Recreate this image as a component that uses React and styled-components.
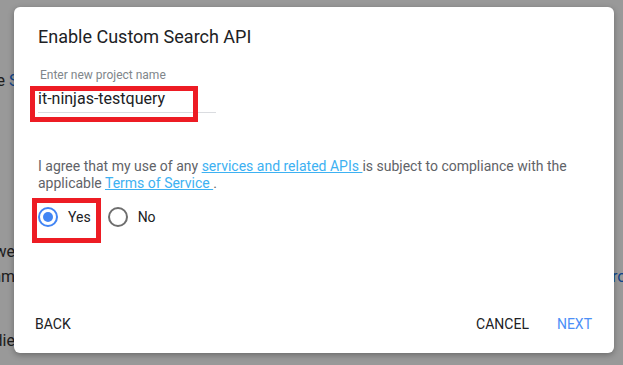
import React from "react";
import styled, { createGlobalStyle } from "styled-components";

const GlobalStyle = createGlobalStyle`
  html, body {
    margin: 0;
    padding: 0;
  }
  body {
    font-family: Roboto, "Noto Sans", "Liberation Sans", sans-serif;
  }
`;

const App = () => {
  return (
    <Page>
      <GlobalStyle />
      <Backdrop>
        <BgLine top={68}>
          <Lead width={9}>Open the </Lead>
          <BgLink>Search Console settings</BgLink>
        </BgLine>
        <BgLine top={146}>
          <Lead width={15}>Now we</Lead>
          <span> can set everything up</span>
        </BgLine>
        <BgLine>
          <Lead width={15}>environm</Lead>
          <span>ent for the</span>
          <Trail>
            <BgLink>roles</BgLink>
          </Trail>
        </BgLine>
        <BgLine top={39}>
          <Lead width={15}>studie</Lead>
          <span>s and more</span>
        </BgLine>
      </Backdrop>

      <Overlay>
        <Dialog>
          <Body>
            <Title>Enable Custom Search API</Title>

            <Field>
              <Label>Enter new project name</Label>
              <Input>it-ninjas-testquery</Input>
              <Highlight left={-8} top={19} width={168} height={36} />
            </Field>

            <Agreement>
              I agree that my use of any <Link>services and related APIs </Link>
              is subject to compliance with the applicable{" "}
              <Link>Terms of Service </Link>.
            </Agreement>

            <Options>
              <Option>
                <Radio checked />
                <OptionText>Yes</OptionText>
                <Highlight left={-6} top={-9} width={69} height={45} />
              </Option>
              <Option>
                <Radio />
                <OptionText>No</OptionText>
              </Option>
            </Options>
          </Body>

          <Footer>
            <Button>Back</Button>
            <Spacer />
            <Button>Cancel</Button>
            <Button primary>Next</Button>
          </Footer>
        </Dialog>
      </Overlay>
    </Page>
  );
};

export default App;

const Page = styled.div`
  position: relative;
  width: 623px;
  height: 365px;
  overflow: hidden;
  background: #ffffff;
`;

const Backdrop = styled.div`
  display: flex;
  flex-direction: column;
  font-size: 16px;
  line-height: 25px;
  color: #333333;
`;

const BgLine = styled.div`
  display: flex;
  white-space: nowrap;
  margin-top: ${(p) => p.top || 0}px;
`;

const Lead = styled.span`
  display: flex;
  justify-content: flex-end;
  flex: 0 0 ${(p) => p.width}px;
  width: ${(p) => p.width}px;
  white-space: pre;
`;

const Trail = styled.span`
  margin-left: auto;
  flex: 0 0 11px;
  width: 11px;
`;

const BgLink = styled.span`
  color: #1a73e8;
`;

const Overlay = styled.div`
  position: absolute;
  inset: 0;
  background: rgba(0, 0, 0, 0.4);
  padding: 7px 0 0 14px;
  box-sizing: border-box;
`;

const Dialog = styled.div`
  display: flex;
  flex-direction: column;
  width: 600px;
  height: 346px;
  background: #ffffff;
  border-radius: 6px;
  box-shadow: 0 2px 6px rgba(0, 0, 0, 0.3);
`;

const Body = styled.div`
  display: flex;
  flex-direction: column;
  padding: 18px 24px 0;
`;

const Title = styled.h2`
  margin: 0;
  font-size: 18px;
  line-height: 24px;
  font-weight: 400;
  color: #202124;
`;

const Field = styled.div`
  position: relative;
  display: flex;
  flex-direction: column;
  width: 178px;
  margin-top: 18px;
`;

const Label = styled.div`
  margin-left: 2px;
  font-size: 12px;
  line-height: 16px;
  color: #80868b;
`;

const Input = styled.div`
  margin-top: 6px;
  padding-bottom: 3px;
  font-size: 16px;
  line-height: 20px;
  color: #202124;
  border-bottom: 1px solid #dadce0;
`;

const Highlight = styled.div`
  position: absolute;
  left: ${(p) => p.left}px;
  top: ${(p) => p.top}px;
  width: ${(p) => p.width}px;
  height: ${(p) => p.height}px;
  border: 5px solid #ed1c24;
  box-sizing: border-box;
  pointer-events: none;
`;

const Agreement = styled.p`
  margin: 45px 0 0;
  font-size: 14px;
  line-height: 17px;
  color: #5f6368;
`;

const Link = styled.a`
  color: #3db1f2;
  text-decoration: underline;
  white-space: pre;
`;

const Options = styled.div`
  display: flex;
  align-items: center;
  gap: 17px;
  margin-top: 13px;
  height: 24px;
`;

const Option = styled.label`
  position: relative;
  display: flex;
  align-items: center;
  gap: 10px;
`;

const Radio = styled.span`
  position: relative;
  width: 20px;
  height: 20px;
  border-radius: 50%;
  border: 2px solid ${(p) => (p.checked ? "#4285f4" : "#6e6e6e")};
  box-sizing: border-box;

  &::after {
    content: "";
    display: ${(p) => (p.checked ? "block" : "none")};
    position: absolute;
    left: 3px;
    top: 3px;
    width: 10px;
    height: 10px;
    border-radius: 50%;
    background: #4285f4;
  }
`;

const OptionText = styled.span`
  font-size: 14px;
  color: #202124;
`;

const Footer = styled.div`
  display: flex;
  align-items: center;
  gap: 12px;
  margin-top: auto;
  padding: 0 14px 11px 13px;
`;

const Spacer = styled.div`
  flex: 1;
`;

const Button = styled.button`
  border: none;
  background: none;
  padding: 0 8px;
  height: 36px;
  font-family: Roboto, "Noto Sans", "Liberation Sans", sans-serif;
  font-size: 14px;
  font-weight: 400;
  text-transform: uppercase;
  color: ${(p) => (p.primary ? "#4d8ff7" : "#202124")};
  cursor: pointer;
`;
